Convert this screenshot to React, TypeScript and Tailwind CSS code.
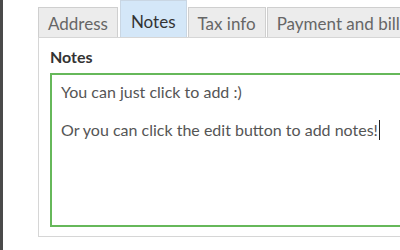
import React from 'react';

const tabs = ['Address', 'Notes', 'Tax info', 'Payment and billing'];

const App: React.FC = () => {
  return (
    <div
      className="w-[400px] h-[250px] overflow-hidden bg-white flex"
      style={{ fontFamily: 'Lato, "Open Sans", sans-serif' }}
    >
      {/* left edge strip */}
      <div className="w-[3px] h-full bg-[#4a4a4a] shrink-0" />

      <div className="flex flex-col pl-[35px] w-[600px] shrink-0">
        <div className="flex items-end h-[37px] gap-[1px]">
          {tabs.map((t) => {
            const active = t === 'Notes';
            return (
              <div
                key={t}
                className={
                  active
                    ? 'h-[37px] px-[10px] ml-[1px] flex items-center pt-[5px] bg-[#d4e7f8] border border-[#c9d6e3] border-b-0 text-[17px] text-[#333]'
                    : 'h-[30px] px-[9px] flex items-center pt-[2px] bg-[#ececec] border border-[#cfcfcf] border-b-0 text-[17px] text-[#666]'
                }
              >
                {t}
              </div>
            );
          })}
        </div>

        <div className="border border-[#d6d6d6] border-r-0 h-[200px] pt-[9px] pl-[11px]">
          <div className="text-[16px] font-bold text-[#333] leading-[20px]">Notes</div>
          <div className="mt-[6px] h-[154px] border-2 border-r-0 border-[#66b85a] pl-[9px] pt-[7px] text-[16px] text-[#555] leading-[20px]">
            <div>You can just click to add :)</div>
            <div className="mt-[18px] flex items-center">
              Or you can click the edit button to add notes!
              <span className="inline-block w-[1.5px] h-[20px] bg-[#222] ml-[1px]" />
            </div>
          </div>
        </div>
      </div>
    </div>
  );
};

export default App;
